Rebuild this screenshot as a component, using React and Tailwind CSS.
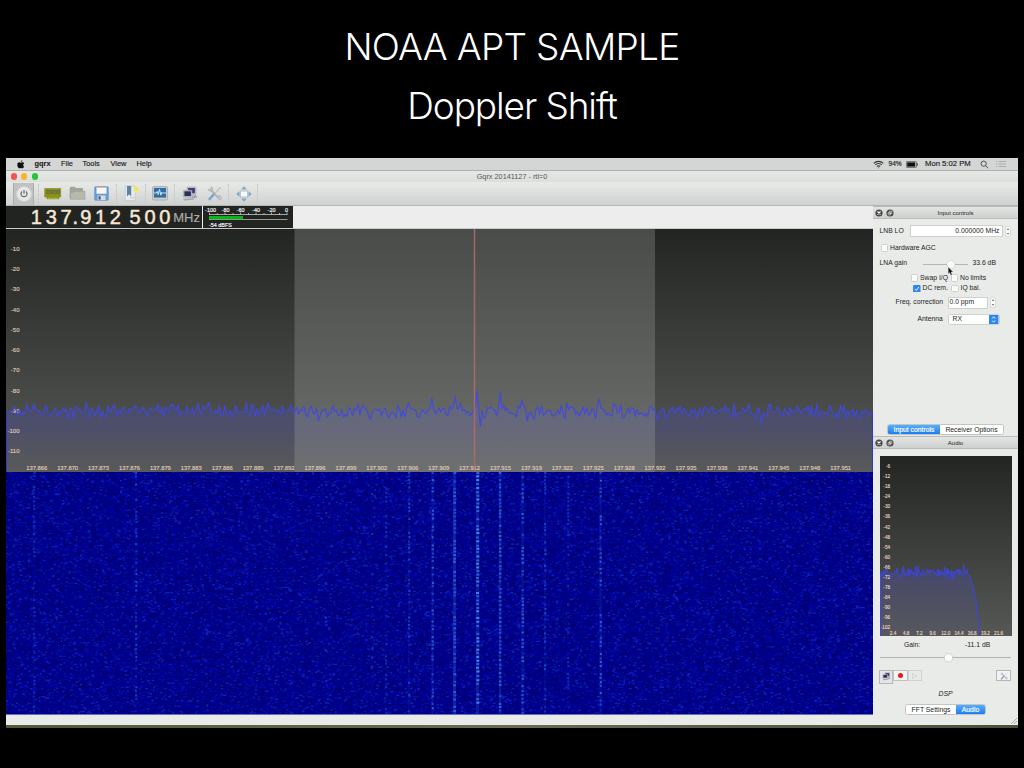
import React from "react";

const FONT = "'Liberation Sans', Arial, sans-serif";

function makeRandom(seed) {
  let a = seed;
  return () => {
    a = (a + 0x6d2b79f5) | 0;
    let t = Math.imul(a ^ (a >>> 15), 1 | a);
    t = (t + Math.imul(t ^ (t >>> 7), 61 | t)) ^ t;
    return ((t ^ (t >>> 14)) >>> 0) / 4294967296;
  };
}

const SPECTRUM_W = 867;
const SPECTRUM_H = 243;

/* Peaks of the main spectrum: [x, height above the noise floor] */
const PEAKS = [
  [28, 7], [129, 6], [403, 8], [426, 13], [448.5, 15], [471.5, 20], [494, 19], [516.5, 11], [594, 12],
];

function spectrumPoints() {
  const rnd = makeRandom(11);
  const pts = [];
  for (let x = 1; x < SPECTRUM_W - 1; x += 1.8) {
    const n = rnd() + rnd() + rnd() - 1.5;
    let y = 182.4 + n * 7.6;
    if (rnd() < 0.02) y += 6;
    pts.push([x, y]);
  }
  for (const [px, h] of PEAKS) {
    for (const p of pts) {
      const d = Math.abs(p[0] - px);
      if (d < 0.95) p[1] = 182 - h;
      else if (d < 3) p[1] = Math.min(p[1], 180);
    }
  }
  for (const p of pts) if (Math.abs(p[0] - 474.5) < 0.9) p[1] = 197;
  return pts.map(([x, y]) => `${x.toFixed(1)},${y.toFixed(1)}`).join(" ");
}

function audioPoints() {
  const rnd = makeRandom(5);
  const pts = [];
  for (let x = 0.5; x < 88; x += 0.8) {
    const n = rnd() + rnd() + rnd() - 1.5;
    pts.push(`${x.toFixed(1)},${(117 + n * 7).toFixed(1)}`);
  }
  pts.push("89,119", "90.5,121", "91,125", "92.5,128", "93.5,134", "95,138", "96.5,147", "97.5,153", "98,163", "99,170", "99.5,180");
  return pts.join(" ");
}

/* Vertical traces of the waterfall: [x, density, width, shade index, glow opacity] */
const TRACES = [
  [28, 0.45, 2, 0, 0.06], [130, 0.5, 2, 1, 0.06], [320, 0.15, 2, 0, 0], [366, 0.2, 2, 0, 0.03], [380, 0.35, 2, 0, 0.05],
  [403, 0.5, 2, 1, 0.1], [426.5, 0.65, 2.2, 2, 0.2], [448.5, 0.8, 2.8, 2, 0.38], [471.5, 0.85, 3, 3, 0.32],
  [494, 0.8, 2.5, 2, 0.3], [516.5, 0.7, 2.4, 2, 0.2], [539, 0.5, 2, 1, 0.1], [562, 0.35, 2, 0, 0.05],
  [594.5, 0.7, 2.2, 2, 0.2],
];

const NOISE_SHADES = ["#000064", "#000074", "#00009c", "#0610ac", "#1028bc"];
const TRACE_SHADES = ["#1438c0", "#2050d4", "#3068dc", "#4c94ec"];

function waterfallPaths() {
  const rnd = makeRandom(77);
  const noise = NOISE_SHADES.map(() => []);
  for (let y = 0; y < 243; y += 1.35) {
    for (let x = 0; x < SPECTRUM_W; x += 1.4 + rnd() * 1.5) {
      const r = rnd();
      const k = r < 0.12 ? 0 : r < 0.32 ? 1 : r < 0.56 ? -1 : r < 0.82 ? 2 : r < 0.95 ? 3 : 4;
      if (k >= 0) noise[k].push(`M${x.toFixed(1)} ${(y + 0.6).toFixed(1)}h${(1.4 + rnd() * 1.5).toFixed(1)}`);
    }
  }
  const traces = TRACE_SHADES.map(() => []);
  for (const [x, density, w, shade] of TRACES) {
    for (let y = 0; y < 241; y += 3 + rnd() * 1.6) {
      if (rnd() < density) {
        const k = Math.max(0, shade - (rnd() < 0.5 ? 1 : 0));
        traces[k].push(`M${(x - w / 2 + rnd() * 0.5).toFixed(1)} ${(y + 1).toFixed(1)}h${w}`);
      }
    }
  }
  return { noise: noise.map((p) => p.join("")), traces: traces.map((p) => p.join("")) };
}

const FREQ_LABELS = [
  866, 870, 873, 876, 879, 883, 886, 889, 892, 896, 899, 902, 906, 909, 912, 915, 919, 922, 925, 928, 932, 935, 938, 941, 945, 948, 951,
];
const SPECTRUM_LINE = spectrumPoints();
const AUDIO_LINE = audioPoints();
const WATERFALL = waterfallPaths();

function Spectrum() {
  return (
    <svg width={SPECTRUM_W} height={SPECTRUM_H} className="block" fontFamily={FONT}>
      <defs>
        <linearGradient id="specBg" x1="0" y1="0" x2="0" y2="1">
          <stop offset="0" stopColor="#222522" />
          <stop offset="0.62" stopColor="#434643" />
          <stop offset="1" stopColor="#585a58" />
        </linearGradient>
        <linearGradient id="specFill" gradientUnits="userSpaceOnUse" x1="0" y1="175" x2="0" y2="243">
          <stop offset="0" stopColor="#4a4bb0" stopOpacity="0.34" />
          <stop offset="0.4" stopColor="#4c4d90" stopOpacity="0.4" />
          <stop offset="1" stopColor="#585870" stopOpacity="0.1" />
        </linearGradient>
      </defs>
      <rect width={SPECTRUM_W} height={SPECTRUM_H} fill="url(#specBg)" />
      <polygon points={`1,243 ${SPECTRUM_LINE} 866,243`} fill="url(#specFill)" />
      <rect x="288.5" y="0" width="360.5" height={SPECTRUM_H} fill="#a0a0a0" fillOpacity="0.32" />
      <g fontSize="6" fill="#e2cfbc" stroke="#e2cfbc" strokeWidth="0.12">
        {[10, 20, 30, 40, 50, 60, 70, 80, 90, 100, 110].map((v, i) => (
          <text key={v} x="13.5" y={22 + i * 20.22} textAnchor="end">{`-${v}`}</text>
        ))}
        {FREQ_LABELS.map((v, i) => (
          <text key={v} x={30.7 + i * 30.92} y="241.3" fontSize="5.8" textAnchor="middle">{`137.${v}`}</text>
        ))}
      </g>
      <polyline points={SPECTRUM_LINE} fill="none" stroke="#4048e2" strokeWidth="1.05" strokeLinejoin="round" />
      <path d="M0.5 183V243M866.5 183V243" stroke="#3438c8" />
      <path d="M468.5 0V243" stroke="#b86a6a" strokeWidth="1.5" strokeOpacity="0.85" />
    </svg>
  );
}

function Waterfall() {
  return (
    <svg width={SPECTRUM_W} height="243" className="block">
      <rect width={SPECTRUM_W} height="243" fill="#000088" />
      {WATERFALL.noise.map((d, i) => <path key={i} d={d} stroke={NOISE_SHADES[i]} strokeWidth="1.35" opacity="0.85" />)}
      {TRACES.map(([x, , w, , glow]) => (
        <rect key={x} x={x - w / 2} y="0" width={w} height="242" fill="#2458cc" opacity={glow} />
      ))}
      {WATERFALL.traces.map((d, i) => <path key={i} d={d} stroke={TRACE_SHADES[i]} strokeWidth="2" opacity="0.85" />)}
      <path d="M0 242.5H867" stroke="#6a6cc4" />
    </svg>
  );
}

function AudioPlot() {
  const db = Array.from({ length: 17 }, (_, i) => -6 * (i + 1));
  return (
    <svg width="132" height="180" className="block" fontFamily={FONT}>
      <defs>
        <linearGradient id="audBg" x1="0" y1="0" x2="0" y2="1">
          <stop offset="0" stopColor="#222522" />
          <stop offset="1" stopColor="#565856" />
        </linearGradient>
        <linearGradient id="audFill" x1="0" y1="0" x2="0" y2="1">
          <stop offset="0" stopColor="#4a4bb0" stopOpacity="0.4" />
          <stop offset="1" stopColor="#5a5a80" stopOpacity="0.2" />
        </linearGradient>
      </defs>
      <rect width="132" height="180" fill="url(#audBg)" />
      <polygon points={`0.5,180 ${AUDIO_LINE}`} fill="url(#audFill)" />
      <g fontSize="4.6" fill="#ecd8c2" stroke="#ecd8c2" strokeWidth="0.12">
        {db.map((v, i) => <text key={v} x="10" y={12.2 + i * 10.05} textAnchor="end">{v}</text>)}
        {["2.4", "4.8", "7.2", "9.6", "12.0", "14.4", "16.8", "19.2", "21.6"].map((t, i) => (
          <text key={t} x={13 + i * 13.2} y="179.3" textAnchor="middle">{t}</text>
        ))}
      </g>
      <polyline points={`0.5,180 ${AUDIO_LINE}`} fill="none" stroke="#3c44e4" strokeWidth="1" />
    </svg>
  );
}

function Meter() {
  return (
    <svg width="90" height="22" className="block bg-[#222422]" fontFamily={FONT}>
      <g fontSize="5.4" fill="#fff" stroke="#fff" strokeWidth="0.15" textAnchor="middle">
        {[["-100", 7.5], ["-80", 22.5], ["-60", 37.5], ["-40", 53], ["-20", 68.5], ["0", 83.5]].map(([t, x]) => (
          <text key={t} x={x} y="6">{t}</text>
        ))}
        <text x="6" y="21" textAnchor="start">-54 dBFS</text>
      </g>
      <path d="M6 8.5H84.5M6.5 6.5v2M14.3 7v2M22 6.5v2M30 7v2M37.5 6.5v2M45.5 7v2M53 6.5v2M61 7v2M68.5 6.5v2M76.5 7v2M84 6.5v2" stroke="#c8c8c8" strokeWidth="0.8" />
      <path d="M6 13.5H84.5" stroke="#989a98" />
      <rect x="6" y="10" width="34" height="3.2" fill="#0ab414" />
    </svg>
  );
}

function Separator() {
  return <div className="h-5 w-px border-l border-dotted border-[#bcbfbd]" />;
}

function PowerIcon() {
  return (
    <svg width="16" height="16" viewBox="0 0 16 16">
      <circle cx="8" cy="8" r="7.4" fill="#e6e8e7" stroke="#d2d4d3" strokeWidth="0.8" />
      <path d="M6 5.5a3 3 0 1 0 4 0M8 4v3.8" fill="none" stroke="#606260" strokeWidth="1.1" />
    </svg>
  );
}

function BoardIcon() {
  return (
    <svg width="18" height="14" viewBox="0 0 18 14">
      <path d="M.7 1.5h16v8.5h-1.7v1.8H3V10H.7z" fill="#8b9210" stroke="#848a1c" strokeWidth=".6" />
      <path d="M2.4 3h3v3.7h-3zM6 3h3v3.7H6zM9.6 3h3v3.7h-3zM13 3h3v3.7h-3z" fill="#5a6236" />
      <path d="M2.8 3.4l2 3m0-3l-2 3m5.6-3l-2 3m0-3l2 3m1.6-3l2 3m0-3l-2 3m3.4-3l2 3m0-3l-2 3" stroke="#9ca07e" strokeWidth=".5" />
      <path d="M4 11.2h10" stroke="#c9c455" strokeWidth="1" strokeDasharray="1 .7" />
    </svg>
  );
}

function FolderIcon() {
  return (
    <svg width="17" height="15" viewBox="0 0 17 15">
      <path d="M1.2 12.5V1.9q0-.7.7-.7h4l1 1.3h6.6v3" fill="#a3a69b" stroke="#94978e" strokeWidth=".7" />
      <path d="M1.3 6.3h3.2l1.2-1h10.2v7.9H1.3z" fill="#b6b9ae" stroke="#989b92" strokeWidth=".6" />
    </svg>
  );
}

function FloppyIcon() {
  return (
    <svg width="15" height="15" viewBox="0 0 15 15">
      <rect x=".7" y=".7" width="13.6" height="13.6" rx="1" fill="#6b9fd4" stroke="#5c8fc4" strokeWidth=".7" />
      <rect x="2.5" y="1" width="10" height="6.7" fill="#f6f8fa" />
      <path d="M2.5 1.5h10" stroke="#e0a090" strokeWidth=".8" />
      <rect x="3.7" y="9.5" width="7.8" height="4.6" fill="#d7dcdf" />
      <rect x="4.6" y="10.3" width="2" height="3.3" fill="#38577b" />
    </svg>
  );
}

function BookmarkIcon() {
  return (
    <svg width="17" height="17" viewBox="0 0 17 17">
      <rect x="2.2" y="1" width="10" height="14.6" rx=".6" fill="#e8ebec" stroke="#bfc4c7" strokeWidth=".7" />
      <path d="M4 1h4.2v10.5L6.1 9.3 4 11.5z" fill="#5e7fa8" />
      <path d="M7 12.8h4" stroke="#c2c6c8" />
      <path d="M13 .8l1 2.1 2.2-.4-1.3 1.8 1.3 1.8-2.2-.3-1 2.1-1-2.1-2.2.3 1.4-1.8-1.4-1.8 2.2.4z" fill="#f0e54e" stroke="#f4ee8a" strokeWidth=".5" />
    </svg>
  );
}

function ScopeIcon() {
  return (
    <svg width="16" height="15" viewBox="0 0 16 15">
      <rect x=".6" y=".6" width="14.8" height="13.4" rx="1.2" fill="#c9cecf" stroke="#989ea2" strokeWidth=".7" />
      <rect x="2" y="2" width="12" height="9.6" fill="#2f6ca8" />
      <path d="M2 7h2.4l.9-1.6.9 3.2L7.5 3.4l1.3 5.8.8-3 .7.8H14" fill="none" stroke="#e4f2fa" strokeWidth=".9" />
    </svg>
  );
}

function ComputersIcon({ size = 16 }) {
  return (
    <svg width={size} height={size} viewBox="0 0 16 16">
      <rect x="5" y="1" width="9" height="7.5" rx=".7" fill="#c6c8cc" stroke="#9a9ca4" strokeWidth=".6" />
      <rect x="6.1" y="2" width="6.8" height="5.2" fill="#3c3e78" />
      <rect x="1.4" y="4.3" width="8.5" height="7" rx=".7" fill="#c6c8cc" stroke="#9a9ca4" strokeWidth=".6" />
      <rect x="2.4" y="5.3" width="6.5" height="4.8" fill="#2c2e60" />
      <path d="M9.5 10l4.5-1 1.2 2.4-4.5 1.3zM1.2 13l8.8-.8 2.2 1.6-10 .8z" fill="#a4a7ae" />
    </svg>
  );
}

function ToolsIcon({ size = 15 }) {
  return (
    <svg width={size} height={size} viewBox="0 0 15 15" fill="none" strokeLinecap="round">
      <path d="M3.5 3.5l8.2 8.6" stroke="#b0b5b7" strokeWidth="2" />
      <path d="M1.5 3.4a2.4 2.4 0 0 0 3.8.8A2.4 2.4 0 0 0 4 1M12 13.6a1.8 1.8 0 1 0-1-3" stroke="#b2b7b9" strokeWidth="1.3" />
      <path d="M13.3 1.5L7.5 7.8" stroke="#bcc0c3" strokeWidth="1.2" />
      <path d="M6.6 8.6l-4 4.4" stroke="#7ba5d0" strokeWidth="2.6" />
    </svg>
  );
}

function ExpandIcon() {
  return (
    <svg width="16" height="16" viewBox="0 0 16 16">
      <rect x="4.3" y="5" width="7.4" height="6" fill="#f6f8f9" stroke="#a9b4bd" strokeWidth=".8" />
      <path d="M8 .6l2.3 2.6H5.7zM8 15.4l2.3-2.6H5.7zM.6 8l2.6-2.3v4.6zM15.4 8l-2.6-2.3v4.6z" fill="#83a9cf" stroke="#7098c2" strokeWidth=".4" />
    </svg>
  );
}

function MenuBar() {
  return (
    <div className="flex h-[12px] items-center bg-[#d3d6d4] text-[7.4px] leading-none text-[#1c1c1c] [-webkit-text-stroke:0.15px_#1c1c1c]">
      <svg width="8" height="9" viewBox="0 0 16 18" className="ml-[10.5px]">
        <path d="M10.7 .4c.1 1.8-1.4 3.5-3.1 3.5C7.4 2.2 9 .6 10.7 .4zM13.9 13.4c-.8 1.7-1.8 3.3-3.2 3.3-1.3 0-1.6-.7-2.9-.7s-1.7.7-2.9.7C2.6 16.7 .6 12.7 .6 9.5c0-3.1 1.9-4.8 3.9-4.8 1.3 0 2.3.9 3.3.9.9 0 2.1-1 3.6-.9 1.3.1 2.4.6 3 1.6-2.7 1.7-2.2 5.4-.5 7.1z" fill="#111" />
      </svg>
      <span className="ml-[10px] w-[26.5px] font-bold">gqrx</span>
      <span className="w-[21.5px]">File</span>
      <span className="w-[28px]">Tools</span>
      <span className="w-[26px]">View</span>
      <span>Help</span>
      <div className="ml-auto flex items-center pr-[12px]">
        <svg width="11" height="9" viewBox="0 0 11 9" fill="none" stroke="#333" strokeWidth="1.1">
          <path d="M.8 3.3a6.6 6.6 0 0 1 9.4 0M2.3 4.9a4.5 4.5 0 0 1 6.4 0M3.9 6.5a2.3 2.3 0 0 1 3.2 0" />
          <circle cx="5.5" cy="7.7" r=".5" fill="#333" stroke="none" />
        </svg>
        <span className="ml-[5px] w-[17px] text-[6.6px]">94%</span>
        <svg width="12" height="7" viewBox="0 0 12 7">
          <rect x=".4" y=".6" width="10" height="5.8" rx=".6" fill="none" stroke="#444" strokeWidth=".7" />
          <rect x="1.2" y="1.4" width="8" height="4.2" fill="#111" />
          <path d="M11.3 2.3v2.4" stroke="#444" />
        </svg>
        <span className="ml-[7.5px] w-[47px] text-[7.7px] whitespace-nowrap">Mon 5:02 PM</span>
        <svg width="9" height="9" viewBox="0 0 9 9" className="ml-[8px]" fill="none" stroke="#444" strokeWidth=".9">
          <circle cx="3.7" cy="3.7" r="2.6" />
          <path d="M5.6 5.6l2.6 2.6" />
        </svg>
        <svg width="10" height="8" viewBox="0 0 10 8" className="ml-[7px]" stroke="#a7aaa8" strokeWidth=".9">
          <path d="M0 1.5h1.3M2.5 1.5h7.5M0 4h1.3M2.5 4h7.5M0 6.5h1.3M2.5 6.5h7.5" />
        </svg>
      </div>
    </div>
  );
}

function TitleBar() {
  return (
    <div className="grid h-[12px] grid-cols-[1fr_auto_1fr] items-center border-t border-[#aeb1af] bg-linear-to-b from-[#e6e8e6] to-[#dcdedc] text-[7.3px] leading-none text-[#555]">
      <div className="flex gap-[4.5px] pl-[4.5px]">
        <i className="size-[6.2px] rounded-full bg-[#f4544d]" />
        <i className="size-[6.2px] rounded-full bg-[#f8b42d]" />
        <i className="size-[6.2px] rounded-full bg-[#27c33c]" />
      </div>
      <span>Gqrx 20141127 - rtl=0</span>
      <span />
    </div>
  );
}

function Toolbar() {
  return (
    <div className="flex h-[24px] items-center border-b border-[#b2b5b3] bg-linear-to-b from-[#e8eae8] to-[#cfd2d0]">
      <div className="flex w-[33px] items-center justify-between pl-[7px]">
        <div className="flex h-[22px] w-[21px] items-center justify-center border-x border-[#a9acaa] bg-[#bfc2c0]">
          <PowerIcon />
        </div>
        <Separator />
      </div>
      <div className="flex w-[78px] items-center pl-[5px]">
        <BoardIcon />
        <span className="ml-[7px]"><FolderIcon /></span>
        <span className="ml-[8px]"><FloppyIcon /></span>
        <span className="ml-[7px]"><Separator /></span>
      </div>
      <div className="flex w-[29px] items-center justify-between pl-[6px]"><BookmarkIcon /><Separator /></div>
      <div className="flex w-[29px] items-center justify-between pl-[6px]"><ScopeIcon /><Separator /></div>
      <div className="flex w-[54px] items-center pl-[7px]">
        <ComputersIcon />
        <span className="ml-[9px]"><ToolsIcon /></span>
        <span className="ml-[6px]"><Separator /></span>
      </div>
      <div className="flex w-[29px] items-center justify-between pl-[7px]"><ExpandIcon /><Separator /></div>
    </div>
  );
}

function Digits({ text }) {
  return text.split("").map((c, i) => <span key={i} className="w-[14.8px] text-center">{c}</span>);
}

function FrequencyBar() {
  return (
    <div className="flex h-[23px] items-start border-b border-[#c8cac8] bg-[#ecedec]">
      <div className="flex h-[22px] w-[195.5px] items-center overflow-hidden bg-[#222422] pl-[23px] text-[20px] leading-none text-[#f6e6d2] [-webkit-text-stroke:0.5px_#f6e6d2]">
        <Digits text="137" />
        <span className="w-[5px] text-center"><span className="-ml-[1px]">.</span></span>
        <Digits text="912" />
        <span className="w-[5px]" />
        <Digits text="500" />
        <span className="ml-px text-[13px] text-[#a9a9a9] [-webkit-text-stroke:0.2px_#a9a9a9]">MHz</span>
      </div>
      <div className="ml-[1.5px]"><Meter /></div>
    </div>
  );
}

function DockHeader({ title }) {
  return (
    <div className="grid h-[13px] grid-cols-[1fr_auto_1fr] items-center border-y border-[#b9bcba] bg-linear-to-b from-[#e3e5e3] to-[#cdd0ce] text-[6px] leading-none text-[#222]">
      <div className="flex gap-[3px] pl-[2px]">
        <svg width="8" height="8" viewBox="0 0 8 8">
          <circle cx="4" cy="4" r="3.6" fill="#464846" />
          <path d="M2.5 2.5L5.5 5.5M5.5 2.5L2.5 5.5" stroke="#fff" strokeWidth="1.1" />
        </svg>
        <svg width="8" height="8" viewBox="0 0 8 8">
          <circle cx="4" cy="4" r="3.6" fill="#464846" />
          <path d="M3.5 2.2h2.3v2.3H3.5zM2.2 3.5h2.3v2.3H2.2z" fill="none" stroke="#dcdedc" strokeWidth=".7" />
        </svg>
      </div>
      <span className="pl-[20px]">{title}</span>
      <span />
    </div>
  );
}

function CheckBox({ checked }) {
  return checked ? (
    <svg width="7.5" height="7.5" viewBox="0 0 8 8" className="shrink-0">
      <rect width="8" height="8" rx="1.3" fill="#2e87f0" />
      <path d="M2 4.2l1.5 1.6L6.1 2.2" fill="none" stroke="#fff" strokeWidth="1" />
    </svg>
  ) : (
    <span className="size-[7.5px] shrink-0 rounded-[1.5px] border border-[#cfd1cf] bg-[#fbfbfb]" />
  );
}

function Spinner() {
  return (
    <svg width="6" height="11" viewBox="0 0 6 11" className="shrink-0">
      <rect x=".4" y=".4" width="5.2" height="10.2" rx="2" fill="#fff" stroke="#c4c6c4" strokeWidth=".6" />
      <path d="M2 4l1-1.3L4 4M2 7l1 1.3L4 7" fill="none" stroke="#444" strokeWidth=".7" />
    </svg>
  );
}

function Tabs({ left, right, active, leftClass, rightClass }) {
  const on = "bg-linear-to-b from-[#58aef8] to-[#1b7df2] text-white [-webkit-text-stroke:0.15px_#fff]";
  const off = "bg-white text-[#222]";
  return (
    <div className="flex h-[11px] overflow-hidden rounded-[2.5px] border border-[#c3c5c3] text-[6.8px] leading-none">
      <div className={`flex items-center justify-center pt-px ${leftClass} ${active === 0 ? on : off}`}>{left}</div>
      <div className={`flex items-center justify-center pt-px ${rightClass} ${active === 1 ? on : off}`}>{right}</div>
    </div>
  );
}

function InputControls() {
  return (
    <div className="h-[206px] pt-[6px]">
      <div className="flex h-[12px] items-center pl-[6.5px]">
        <span className="w-[30px]">LNB LO</span>
        <div className="flex h-[12px] w-[93px] items-center justify-end border border-[#cfd1cf] bg-white pr-[2px]">0.000000 MHz</div>
        <span className="ml-[2px]"><Spinner /></span>
      </div>
      <div className="mt-[7px] flex h-[8px] items-center gap-[2px] pl-[7.5px]"><CheckBox />Hardware AGC</div>
      <div className="mt-[6px] flex h-[11px] items-center pl-[6.5px]">
        <span className="w-[43.5px]">LNA gain</span>
        <svg width="45" height="16" viewBox="0 0 45 16" className="overflow-visible">
          <path d="M0 8.5h45" stroke="#b4b6b4" />
          <circle cx="28" cy="8.5" r="4" fill="#fff" stroke="#c3c5c3" strokeWidth=".6" />
          <path d="M25.2 11v7l1.5-1.4 1.2 2.8 1.3-.6-1.2-2.7h2.1z" fill="#111" stroke="#ddd" strokeWidth=".4" />
        </svg>
        <span className="ml-[4.5px]">33.6 dB</span>
      </div>
      <div className="mt-[5px] flex h-[8px] items-center pl-[37.5px]">
        <CheckBox /><span className="ml-[2px] w-[30.5px] whitespace-nowrap">Swap I/Q</span><CheckBox /><span className="ml-[2px]">No limits</span>
      </div>
      <div className="mt-[2.5px] flex h-[8px] items-center pl-[40px]">
        <CheckBox checked /><span className="ml-[2px] w-[28.5px]">DC rem.</span><CheckBox /><span className="ml-[2px]">IQ bal.</span>
      </div>
      <div className="mt-[4px] flex h-[12px] items-center pl-[22.5px]">
        <span className="w-[52px]">Freq. correction</span>
        <div className="flex h-[12px] w-[40px] items-center border border-[#cfd1cf] bg-white pl-px">0.0 ppm</div>
        <span className="ml-[2px]"><Spinner /></span>
      </div>
      <div className="mt-[5px] flex h-[12px] items-center pl-[44.5px]">
        <span className="w-[30px]">Antenna</span>
        <div className="flex h-[11px] w-[52px] items-center justify-between overflow-hidden rounded-[2px] border border-[#cfd1cf] bg-white pl-[4px]">
          RX
          <svg width="9.5" height="11" viewBox="0 0 9.5 11">
            <rect width="9.5" height="11" fill="#2e87f0" />
            <path d="M3.2 4.5l1.5-1.7 1.5 1.7M3.2 6.5l1.5 1.7 1.5-1.7" fill="none" stroke="#fff" strokeWidth=".9" />
          </svg>
        </div>
      </div>
    </div>
  );
}

function AudioControls() {
  return (
    <div>
      <div className="pt-[7px] pl-[6.5px]"><AudioPlot /></div>
      <div className="flex h-[17px] items-center pt-px pl-[31px]">
        <span className="w-[61px]">Gain:</span><span>-11.1 dB</span>
      </div>
      <svg width="145" height="10" className="block">
        <path d="M7 4.5H138" stroke="#b2b4b2" />
        <circle cx="75.5" cy="4.7" r="4.2" fill="#fff" stroke="#bdbfbd" strokeWidth=".7" />
      </svg>
      <div className="mt-[7px] flex h-[14px] items-start pr-[7px] pl-[6px]">
        <div className="flex h-[13.5px] w-[14px] items-center justify-center border border-[#b5b7b5] bg-[#e4e6e4]"><ComputersIcon size={9} /></div>
        <div className="flex h-[11px] w-[14.5px] items-center justify-center border border-[#c0c2c0] bg-[#f2f3f2]"><i className="size-[5.5px] rounded-full bg-[#e01b1b]" /></div>
        <div className="flex h-[11px] w-[14px] items-center justify-center border border-[#cfd1cf] bg-[#e8eae8]">
          <svg width="5" height="6" viewBox="0 0 5 6"><path d="M.5 .5l4 2.5-4 2.5z" fill="none" stroke="#cdd0ce" strokeWidth=".7" /></svg>
        </div>
        <div className="ml-auto flex h-[11px] w-[15px] items-center justify-center border border-[#b5b7b5] bg-[#f2f3f2]"><ToolsIcon size={8} /></div>
      </div>
      <div className="flex h-[20px] items-center justify-center italic">DSP</div>
      <div className="flex justify-center">
        <Tabs left="FFT Settings" right="Audio" active={1} leftClass="w-[50px]" rightClass="w-[29px]" />
      </div>
    </div>
  );
}

export default function App() {
  return (
    <div className="flex h-[768px] w-[1024px] flex-col overflow-hidden bg-black" style={{ fontFamily: FONT }}>
      <header className="flex h-[158px] flex-col items-center pt-[18px] font-['Inter','Liberation_Sans',sans-serif] text-[37px] leading-[58.5px] font-light text-white">
        <h1 className="tracking-[-0.7px]">NOAA APT SAMPLE</h1>
        <h2 className="tracking-[-1.1px]">Doppler Shift</h2>
      </header>
      <main className="ml-[6px] flex h-[570px] w-[1012px] flex-col bg-[#e9ebe9]">
        <MenuBar />
        <TitleBar />
        <Toolbar />
        <div className="flex h-[519px]">
          <section className="w-[867px]">
            <FrequencyBar />
            <Spectrum />
            <Waterfall />
          </section>
          <aside className="h-[519px] w-[145px] bg-[#e9ebe9] text-[6.8px] leading-none text-[#1d1d1d]">
            <DockHeader title="Input controls" />
            <InputControls />
            <div className="-mt-px flex h-[12px] items-start justify-center">
              <Tabs left="Input controls" right="Receiver Options" active={0} leftClass="w-[52px]" rightClass="w-[63px]" />
            </div>
            <DockHeader title="Audio" />
            <AudioControls />
            <svg width="145" height="9" className="block"><path d="M138 9l6-6M141 9l3-3" stroke="#9a9c9a" strokeWidth=".8" /></svg>
          </aside>
        </div>
        <div className="h-[3px] shrink-0 bg-linear-to-r from-[#4d5b3c] via-[#6c6b52] to-[#46513c]" />
      </main>
    </div>
  );
}
